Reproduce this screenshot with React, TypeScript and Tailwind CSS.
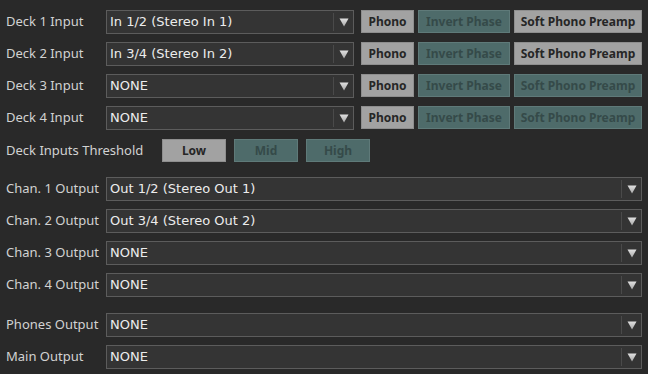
const font = { fontFamily: '"Noto Sans", "DejaVu Sans", sans-serif' }
const valueFont = { fontFamily: '"DejaVu Sans", Verdana, sans-serif' }

function Arrow() {
  return (
    <svg width="10" height="9" viewBox="0 0 10 9" className="block">
      <defs>
        <linearGradient id="arr" x1="0" y1="0" x2="0" y2="1">
          <stop offset="0" stopColor="#e0e0e0" />
          <stop offset="1" stopColor="#a8a8a8" />
        </linearGradient>
      </defs>
      <path d="M0.5 0.5 H9.5 L5 8.5 Z" fill="url(#arr)" />
    </svg>
  )
}

function Select({ value, wide }: { value: string; wide?: boolean }) {
  return (
    <div
      className={`flex h-[24px] items-stretch border border-[#5c5c5c] bg-[#343434] ${wide ? 'w-[536px]' : 'w-[248px]'}`}
    >
      <div className="flex flex-1 items-center pl-[3px] text-[13px] text-[#ececec]" style={valueFont}>
        {value}
      </div>
      <div className="my-[2px] w-px bg-[#4a4a4a]" />
      <div className="flex w-[19px] items-center justify-center">
        <Arrow />
      </div>
    </div>
  )
}

function Btn({ label, on, w }: { label: string; on: boolean; w: string }) {
  return (
    <div
      className={`flex h-[23px] items-center justify-center border text-[12px] font-bold ${w} ${
        on ? 'border-[#8e8e8e] bg-[#a2a2a2] text-[#262626]' : 'border-[#5f7a79] bg-[#4e6b6a] text-[#354a49]'
      }`}
    >
      {label}
    </div>
  )
}

function Row({ label, children }: { label: string; children: React.ReactNode }) {
  return (
    <div className="flex items-start">
      <div className="flex h-[24px] w-[100px] items-center text-[13px] text-[#d2d2d2]">{label}</div>
      {children}
    </div>
  )
}

const decks = [
  { label: 'Deck 1 Input', value: 'In 1/2 (Stereo In 1)', soft: true },
  { label: 'Deck 2 Input', value: 'In 3/4 (Stereo In 2)', soft: true },
  { label: 'Deck 3 Input', value: 'NONE', soft: false },
  { label: 'Deck 4 Input', value: 'NONE', soft: false },
]

const chans = [
  { label: 'Chan. 1 Output', value: 'Out 1/2 (Stereo Out 1)' },
  { label: 'Chan. 2 Output', value: 'Out 3/4 (Stereo Out 2)' },
  { label: 'Chan. 3 Output', value: 'NONE' },
  { label: 'Chan. 4 Output', value: 'NONE' },
]

export default function App() {
  return (
    <div className="h-[374px] w-[648px] overflow-hidden bg-[#292929] pl-[6px] pt-[10px]" style={font}>
      <div className="flex flex-col gap-[8px]">
        {decks.map((d) => (
          <Row key={d.label} label={d.label}>
            <Select value={d.value} />
            <div className="ml-[7px] flex gap-[4px]">
              <Btn label="Phono" on w="w-[53px]" />
              <Btn label="Invert Phase" on={false} w="w-[92px]" />
              <Btn label="Soft Phono Preamp" on={d.soft} w="w-[128px]" />
            </div>
          </Row>
        ))}
      </div>

      <div className="mt-[9px] flex items-center">
        <div className="w-[156px] text-[13px] text-[#d2d2d2]">Deck Inputs Threshold</div>
        <div className="flex gap-[8px]">
          <Btn label="Low" on w="w-[64px]" />
          <Btn label="Mid" on={false} w="w-[64px]" />
          <Btn label="High" on={false} w="w-[64px]" />
        </div>
      </div>

      <div className="mt-[15px] flex flex-col gap-[8px]">
        {chans.map((c) => (
          <Row key={c.label} label={c.label}>
            <Select value={c.value} wide />
          </Row>
        ))}
      </div>

      <div className="mt-[16px] flex flex-col gap-[8px]">
        <Row label="Phones Output">
          <Select value="NONE" wide />
        </Row>
        <Row label="Main Output">
          <Select value="NONE" wide />
        </Row>
      </div>
    </div>
  )
}
